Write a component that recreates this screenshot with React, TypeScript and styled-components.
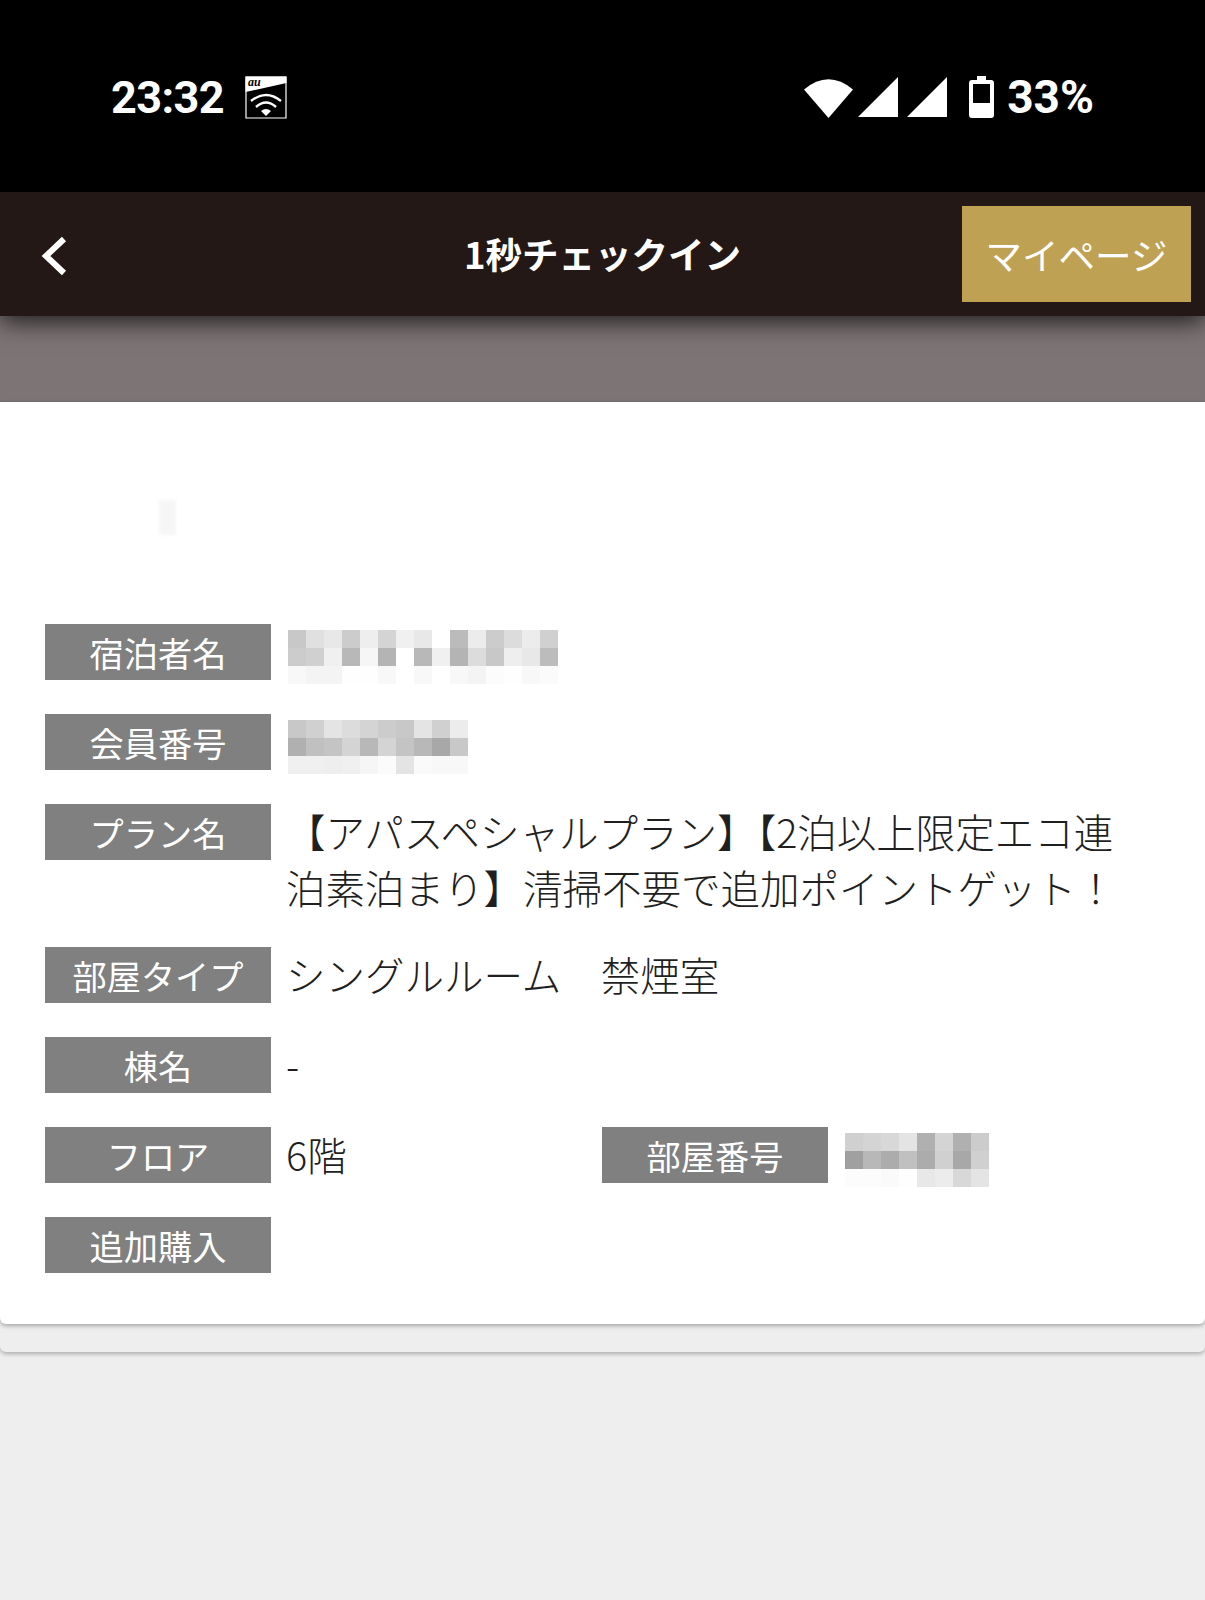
import styled, { createGlobalStyle } from "styled-components";

const GlobalStyle = createGlobalStyle`
  html, body {
    margin: 0;
    padding: 0;
    background: #eeeeee;
  }
  * {
    box-sizing: border-box;
  }
`;

const Page = styled.div`
  display: flex;
  flex-direction: column;
  width: 1205px;
  min-height: 1600px;
  background: #eeeeee;
  font-family: "Noto Sans CJK JP", "Noto Sans", sans-serif;
  overflow: hidden;
`;

const StatusBar = styled.div`
  display: flex;
  align-items: center;
  justify-content: space-between;
  height: 192px;
  padding: 2px 111px 0 111px;
  background: #000;
  color: #fff;
  font-family: Roboto, "Liberation Sans", sans-serif;
`;

const StatusGroup = styled.div`
  display: flex;
  align-items: center;
`;

const Clock = styled.span`
  font-size: 45px;
  font-weight: 700;
  line-height: 1;
  letter-spacing: -0.6px;
  margin-right: 21px;
`;

const Percent = styled.span`
  font-size: 46px;
  font-weight: 700;
  line-height: 1;
  letter-spacing: 0;
  margin-left: 13px;
`;

const IconGap = styled.svg<{ $gap?: number }>`
  display: block;
  margin-left: ${(props) => props.$gap ?? 0}px;
`;

const Header = styled.header`
  position: relative;
  z-index: 2;
  display: grid;
  grid-template-columns: 1fr auto 1fr;
  align-items: center;
  height: 124px;
  padding: 0 14px;
  background: #231815;
  box-shadow: 0 5px 24px rgba(0, 0, 0, 0.8);
`;

const BackIcon = styled.svg`
  display: block;
  margin: 4px 0 0 26px;
`;

const Title = styled.h1`
  margin: 0;
  color: #fff;
  font-size: 36.5px;
  font-weight: 700;
  line-height: 1;
  white-space: nowrap;
`;

const MyPage = styled.button`
  justify-self: end;
  width: 229px;
  height: 96px;
  padding: 0;
  border: none;
  background: #bfa154;
  color: #fff;
  font-family: inherit;
  font-size: 36.5px;
  font-weight: 400;
`;

const Band = styled.div`
  height: 86px;
  background: #7d7475;
`;

const Sheet = styled.div`
  padding-bottom: 28px;
  background: #eeeeee;
  border-radius: 0 0 6px 6px;
  box-shadow: 0 2px 4px rgba(0, 0, 0, 0.28);
`;

const Card = styled.main`
  display: flex;
  flex-direction: column;
  height: 922px;
  padding: 0 45px;
  background: #fff;
  border-radius: 0 0 6px 6px;
  box-shadow: 0 2px 4px rgba(0, 0, 0, 0.3);
`;

const FaintMark = styled.div`
  width: 17px;
  height: 35px;
  margin: 98px 0 89px 114px;
  background: #f6f6f6;
  filter: blur(1.5px);
`;

const Row = styled.div<{ $tall?: boolean }>`
  display: flex;
  align-items: flex-start;
  gap: 16px;
  margin-bottom: ${(props) => (props.$tall ? 31 : 34)}px;
`;

const HalfField = styled.div`
  display: flex;
  align-items: flex-start;
  gap: 16px;
  width: 541px;
`;

const Label = styled.div`
  flex: none;
  width: 226px;
  height: 56px;
  background: #808080;
  color: #fff;
  font-size: 34.2px;
  font-weight: 400;
  line-height: 56px;
  text-align: center;
  white-space: nowrap;
`;

const Value = styled.div`
  min-height: 56px;
  margin-left: -1px;
  color: #1f1f1f;
  font-size: 39.5px;
  font-weight: 300;
  line-height: 56px;
  white-space: pre;
  transform: translateY(-1px);
`;

const Mosaic = styled.div<{ $columns: number }>`
  display: grid;
  grid-template-columns: repeat(${(props) => props.$columns}, 18px);
  grid-auto-rows: 18px;
  margin: 6px 0 -4px 1px;
`;

const Cell = styled.div<{ $shade: string }>`
  background: #${(props) => props.$shade};
`;

const guestName = [
  "c8 e0 e8 cc ee d4 f0 e8 ff bb ec cc dc ec d0",
  "cc d0 f0 b8 f6 b4 ff b8 f0 b4 dc c8 ee e8 bc",
  "f8 f4 f4 fe fe f8 ff f8 ff f8 f4 fc fe f8 fb",
];

const memberNumber = [
  "c8 d0 e4 dc d4 cc c8 e4 d0 ec",
  "b0 c0 c4 d4 b8 d4 c4 b8 a8 c8",
  "f0 f0 ee f0 f6 fb e4 fa f8 f8",
];

const roomNumber = [
  "d0 d4 d8 e4 b0 d4 b0 cc",
  "a0 b8 ac c0 ac d0 a8 d0",
  "fc fc fa fe e8 ec d8 e4",
];

function Pixelated({ rows }: { rows: string[] }) {
  const cells = rows.flatMap((row) => row.split(" "));
  return (
    <Mosaic $columns={rows[0].split(" ").length}>
      {cells.map((shade, index) => {
        const grey = shade + shade + shade;
        return <Cell key={index} $shade={grey} />;
      })}
    </Mosaic>
  );
}

function AuWifiIcon() {
  return (
    <svg width="42" height="43" viewBox="0 0 42 43">
      <path d="M1 1H41V42H1Z" fill="#000" stroke="#fff" strokeWidth="1.2" />
      <path d="M0.5 0.5H41.5V7L0.5 16Z" fill="#fff" />
      <text x="3" y="10" fontFamily="Liberation Serif" fontStyle="italic" fontWeight="700" fontSize="12" fill="#000">
        au
      </text>
      <path d="M6 25Q21 13 36 25" fill="none" stroke="#fff" strokeWidth="2.4" />
      <path d="M11 31Q21 22 31 31" fill="none" stroke="#fff" strokeWidth="2.4" />
      <path d="M16 35Q21 31 26 35L21 40Z" fill="#fff" />
    </svg>
  );
}

export default function App() {
  return (
    <Page>
      <GlobalStyle />
      <StatusBar>
        <StatusGroup>
          <Clock>23:32</Clock>
          <AuWifiIcon />
        </StatusGroup>
        <StatusGroup>
          <IconGap width="49" height="41" viewBox="0 0 49 41">
            <path d="M0 12.5Q24.500 -8 49 12.500L24.500 41Z" fill="#fff" />
          </IconGap>
          <IconGap $gap={5} width="40" height="40" viewBox="0 0 40 40">
            <path d="M0 40L40 0V40Z" fill="#fff" />
          </IconGap>
          <IconGap $gap={9} width="40" height="40" viewBox="0 0 40 40">
            <path d="M0 40L40 0V40Z" fill="#fff" />
          </IconGap>
          <IconGap $gap={22} width="25" height="42" viewBox="0 0 25 42">
            <path
              fillRule="evenodd"
              d="M8 0H17V4H22Q25 4 25 7V39Q25 42 22 42H3Q0 42 0 39V7Q0 4 3 4H8ZM4 8V27H21V8Z"
              fill="#fff"
            />
          </IconGap>
          <Percent>33%</Percent>
        </StatusGroup>
      </StatusBar>

      <Header>
        <BackIcon width="28" height="40" viewBox="0 0 28 40">
          <path d="M24 3L6 20L24 37" fill="none" stroke="#fff" strokeWidth="6" />
        </BackIcon>
        <Title>1秒チェックイン</Title>
        <MyPage>マイページ</MyPage>
      </Header>
      <Band />

      <Sheet>
        <Card>
          <FaintMark />
          <Row>
            <Label>宿泊者名</Label>
            <Pixelated rows={guestName} />
          </Row>
          <Row>
            <Label>会員番号</Label>
            <Pixelated rows={memberNumber} />
          </Row>
          <Row $tall>
            <Label>プラン名</Label>
            <Value>
              【アパスペシャルプラン】【2泊以上限定エコ連
              <br />
              泊素泊まり】清掃不要で追加ポイントゲット！
            </Value>
          </Row>
          <Row>
            <Label>部屋タイプ</Label>
            <Value>シングルルーム　禁煙室</Value>
          </Row>
          <Row>
            <Label>棟名</Label>
            <Value>-</Value>
          </Row>
          <Row>
            <HalfField>
              <Label>フロア</Label>
              <Value>6階</Value>
            </HalfField>
            <HalfField>
              <Label>部屋番号</Label>
              <Pixelated rows={roomNumber} />
            </HalfField>
          </Row>
          <Row>
            <Label>追加購入</Label>
          </Row>
        </Card>
      </Sheet>
    </Page>
  );
}
